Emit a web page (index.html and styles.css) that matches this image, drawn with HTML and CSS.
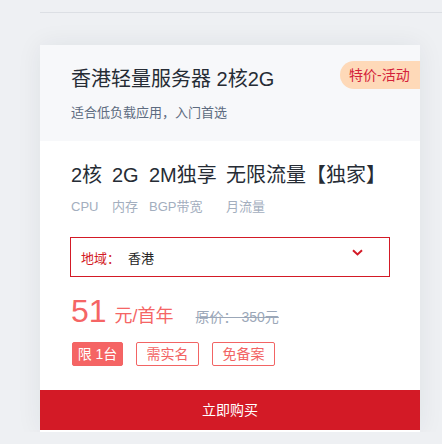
FILE: index.html
```html
<!DOCTYPE html>
<html lang="zh-CN">
<head>
    <meta charset="UTF-8">
    <meta name="viewport" content="width=device-width, initial-scale=1.0">
    <title>香港轻量服务器</title>
    <link rel="stylesheet" href="styles.css">
</head>
<body>
    <div class="top-line"></div>
    <div class="card">
        <div class="card-head">
            <div class="title">香港轻量服务器 2核2G</div>
            <div class="desc">适合低负载应用，入门首选</div>
            <span class="badge">特价-活动</span>
        </div>
        <div class="card-body">
            <div class="specs">
                <span class="spec">2核</span>
                <span class="spec">2G</span>
                <span class="spec">2M独享</span>
                <span class="spec">无限流量【独家】</span>
                <span class="spec-label">CPU</span>
                <span class="spec-label">内存</span>
                <span class="spec-label">BGP带宽</span>
                <span class="spec-label">月流量</span>
            </div>
            <div class="select">
                <span class="select-label">地域：</span>
                <span class="select-value">香港</span>
                <svg class="arrow" width="11" height="7" viewBox="0 0 11 7">
                    <path d="M1 1.2 L5.5 5.4 L10 1.2" fill="none" stroke="#d31a26" stroke-width="2"/>
                </svg>
            </div>
            <div class="price">
                <span class="num">51</span>
                <span class="unit">元/首年</span>
                <span class="old">原价： 350元</span>
            </div>
            <div class="tags">
                <span class="tag tag-fill">限 1台</span>
                <span class="tag">需实名</span>
                <span class="tag">免备案</span>
            </div>
        </div>
        <div class="buy">立即购买</div>
    </div>
</body>
</html>
```

FILE: styles.css
```css
* {
    margin: 0;
    padding: 0;
    box-sizing: border-box;
}
body {
    background-color: #eef0f3;
    font-family: "Liberation Sans", "Noto Sans CJK SC", sans-serif;
    color: #333;
}
.top-line {
    margin: 12px 0 0 40px;
    height: 1px;
    background-color: #dcdfe4;
}
.card {
    position: relative;
    margin: 32px 0 0 40px;
    width: 380px;
    background-color: #fff;
    padding-bottom: 2px;
    overflow: hidden;
    box-shadow: 0 0 24px rgba(30, 40, 60, 0.07);
}
.card-head {
    position: relative;
    height: 96px;
    padding: 20px 0 0 31px;
    background-color: #f7f8fa;
}
.title {
    font-size: 20px;
    line-height: 28px;
    color: #262c35;
}
.desc {
    margin-top: 10px;
    font-size: 13px;
    line-height: 20px;
    color: #5d6b80;
}
.badge {
    position: absolute;
    top: 16px;
    right: 0;
    height: 28px;
    width: 80px;
    padding-left: 9px;
    line-height: 28px;
    font-size: 14px;
    color: #d4213a;
    background-color: #fed9b8;
    border-radius: 14px 0 0 14px;
}
.card-body {
    padding: 20px 30px 24px 30px;
}
.specs {
    display: grid;
    grid-template-columns: 41px 37px 77px auto;
    justify-content: start;
    row-gap: 8px;
    padding-left: 1px;
}
.spec {
    font-size: 20px;
    line-height: 28px;
    color: #262c35;
    white-space: nowrap;
}
.spec-label {
    font-size: 13px;
    line-height: 20px;
    color: #a3aebe;
}
.select {
    display: flex;
    align-items: center;
    margin-top: 20px;
    height: 40px;
    width: 320px;
    padding: 0 26px 0 10px;
    border: 1px solid #d31a26;
    font-size: 13px;
}
.select-label {
    color: #d31a26;
}
.select-value {
    margin-left: 8px;
    color: #222;
}
.arrow {
    margin: -9px 0 0 auto;
}
.price {
    display: flex;
    align-items: baseline;
    margin-top: 14px;
    padding-left: 1px;
    height: 40px;
    line-height: 40px;
    color: #f56565;
}
.num {
    font-size: 32px;
}
.unit {
    margin-left: 8px;
    font-size: 18px;
}
.old {
    margin-left: 22px;
    font-size: 14px;
    color: #9ba7b8;
    text-decoration: line-through;
}
.tags {
    display: flex;
    gap: 13px;
    margin-top: 11px;
    padding-left: 2px;
}
.tag {
    width: 63px;
    height: 24px;
    line-height: 22px;
    text-align: center;
    font-size: 14px;
    color: #f26464;
    border: 1px solid #f26464;
    border-radius: 2px;
}
.tag-fill {
    width: 51px;
    color: #fff;
    background-color: #f56464;
}
.buy {
    height: 40px;
    line-height: 40px;
    text-align: center;
    font-size: 14px;
    color: #fff;
    background-color: #d31a26;
}
```
